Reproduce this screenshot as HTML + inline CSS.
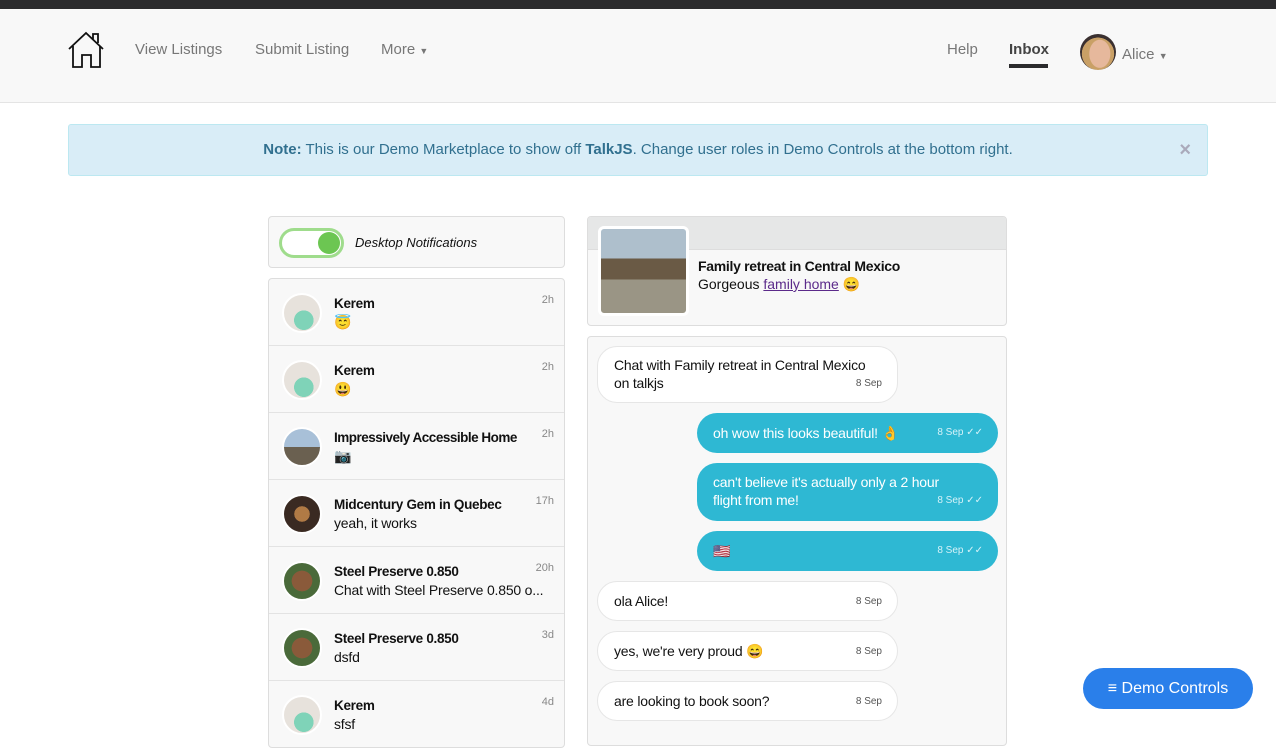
<!DOCTYPE html>
<html><head><meta charset="utf-8"><style>
*{box-sizing:border-box;margin:0;padding:0}
body{width:1276px;height:731px;overflow:hidden;background:#fff;font-family:"Liberation Sans",sans-serif;position:relative;color:#111}
.abs{position:absolute}
.top{left:0;top:0;width:1276px;height:9px;background:#2b2b2d}
.hdr{left:0;top:9px;width:1276px;height:94px;background:#f8f8f8;border-bottom:1px solid #e4e4e4}
.nav{font-size:15px;color:#777}
.alert{left:68px;top:124px;width:1140px;height:52px;background:#d9edf7;border:1px solid #bce8f1;border-radius:3px;color:#31708f;font-size:15px;text-align:center;line-height:50px}
.box{background:#f8f8f8;border:1px solid #ddd;border-radius:4px}
.item{position:absolute;left:0;width:295px;height:67px;border-bottom:1px solid #e3e3e3}
.av{position:absolute;left:13px;top:14px;width:40px;height:40px;border-radius:50%;border:2px solid #fff}
.nm{position:absolute;left:65px;top:17px;font-weight:bold;font-size:13.5px;letter-spacing:-0.3px}
.pv{position:absolute;left:65px;top:35px;font-size:14px;white-space:nowrap;overflow:hidden;width:210px;letter-spacing:-0.2px}
.tm{position:absolute;right:10px;top:15px;font-size:11px;color:#888}
.b{position:absolute;border-radius:20px;font-size:14px;padding:0 16px;line-height:18px;letter-spacing:-0.2px}
.bl{left:597px;width:301px;background:#fff;border:1px solid #e6e6e6;color:#111}
.br{left:697px;width:301px;background:#2eb8d3;color:#fff}
.d{position:absolute;right:15px;font-size:10px;line-height:12px;letter-spacing:0}
.bl .d{color:#555}.br .d{color:#d6f2f8}
</style></head><body>
<div class="abs top"></div>
<div class="abs hdr"></div>
<svg class="abs" style="left:67px;top:31px" width="40" height="38" viewBox="0 0 40 38" fill="none" stroke="#111" stroke-width="1.8"><path d="M2 18 L19 2 L36 18"/><path d="M6 15 V36 H15 V24 H24 V36 H33 V15"/><path d="M26 8 V3 H31 V12"/></svg>
<div class="abs nav" style="left:135px;top:41px">View Listings</div>
<div class="abs nav" style="left:255px;top:41px">Submit Listing</div>
<div class="abs nav" style="left:381px;top:41px">More <span style="font-size:9px">▼</span></div>
<div class="abs nav" style="left:947px;top:41px">Help</div>
<div class="abs nav" style="left:1009px;top:41px;color:#444;font-weight:bold">Inbox</div>
<div class="abs" style="left:1009px;top:64px;width:39px;height:4px;background:#2b2b2d"></div>
<div class="abs" style="left:1080px;top:34px;width:36px;height:36px;border-radius:50%;background:radial-gradient(ellipse 30% 40% at 55% 55%,#e6b89c 0 95%,transparent 100%),radial-gradient(circle at 50% 55%,#c9a066 0 60%,#3a3030 61%)"></div>
<div class="abs nav" style="left:1122px;top:46px">Alice <span style="font-size:9px">▼</span></div>
<div class="abs alert"><b>Note:</b> This is our Demo Marketplace to show off <b>TalkJS</b>. Change user roles in Demo Controls at the bottom right.<span style="position:absolute;right:16px;color:#aab;font-weight:bold;font-size:20px">×</span></div>

<div class="abs box" style="left:268px;top:216px;width:297px;height:52px">
<div class="abs" style="left:10px;top:11px;width:65px;height:30px;border:3px solid #9fdc8c;border-radius:15px;background:#fff"><div class="abs" style="right:1px;top:1px;width:22px;height:22px;border-radius:50%;background:#6cc652"></div></div>
<div class="abs" style="left:86px;top:18px;font-style:italic;font-size:13px">Desktop Notifications</div>
</div>

<div class="abs box" style="left:268px;top:278px;width:297px;height:470px;overflow:hidden">
<div class="item" style="top:0"><div class="av" style="background:radial-gradient(circle at 55% 70%,#7fd3b8 0 30%,#e7e2dc 31%)"></div><div class="nm">Kerem</div><div class="pv">😇</div><div class="tm">2h</div></div>
<div class="item" style="top:67px"><div class="av" style="background:radial-gradient(circle at 55% 70%,#7fd3b8 0 30%,#e7e2dc 31%)"></div><div class="nm">Kerem</div><div class="pv">😃</div><div class="tm">2h</div></div>
<div class="item" style="top:134px"><div class="av" style="background:linear-gradient(#a8c0d8 50%,#6a6050 50%)"></div><div class="nm" style="letter-spacing:-0.5px">Impressively Accessible Home</div><div class="pv">📷</div><div class="tm">2h</div></div>
<div class="item" style="top:201px"><div class="av" style="background:radial-gradient(circle,#b07a45 0 30%,#3a2a22 31%)"></div><div class="nm">Midcentury Gem in Quebec</div><div class="pv">yeah, it works</div><div class="tm">17h</div></div>
<div class="item" style="top:268px"><div class="av" style="background:radial-gradient(circle,#8a5a3a 0 40%,#4a6a3a 41%)"></div><div class="nm">Steel Preserve 0.850</div><div class="pv">Chat with Steel Preserve 0.850 o...</div><div class="tm">20h</div></div>
<div class="item" style="top:335px"><div class="av" style="background:radial-gradient(circle,#8a5a3a 0 40%,#4a6a3a 41%)"></div><div class="nm">Steel Preserve 0.850</div><div class="pv">dsfd</div><div class="tm">3d</div></div>
<div class="item" style="top:402px"><div class="av" style="background:radial-gradient(circle at 55% 70%,#7fd3b8 0 30%,#e7e2dc 31%)"></div><div class="nm">Kerem</div><div class="pv">sfsf</div><div class="tm">4d</div></div>
</div>

<div class="abs box" style="left:587px;top:216px;width:420px;height:110px;overflow:hidden">
<div class="abs" style="left:0;top:0;width:420px;height:33px;background:#e6e7e7;border-bottom:1px solid #ddd"></div>
<div class="abs" style="left:10px;top:9px;width:91px;height:90px;border:3px solid #fff;border-radius:6px;background:linear-gradient(#aebfcc 0 35%,#6a5a45 35% 60%,#9a9585 60%)"></div>
<div class="abs" style="left:110px;top:41px;font-weight:bold;font-size:14px;letter-spacing:-0.3px">Family retreat in Central Mexico</div>
<div class="abs" style="left:110px;top:59px;font-size:14px">Gorgeous <span style="color:#5b2a8a;text-decoration:underline">family home</span> 😄</div>
</div>

<div class="abs box" style="left:587px;top:336px;width:420px;height:410px"></div>
<div class="b bl" style="top:346px;height:57px;padding-top:9px">Chat with Family retreat in Central Mexico<br>on talkjs<span class="d" style="top:31px">8 Sep</span></div>
<div class="b br" style="top:413px;height:40px;line-height:40px">oh wow this looks beautiful! 👌<span class="d" style="top:14px">8 Sep ✓✓</span></div>
<div class="b br" style="top:463px;height:58px;padding-top:10px">can't believe it's actually only a 2 hour<br>flight from me!<span class="d" style="top:32px">8 Sep ✓✓</span></div>
<div class="b br" style="top:531px;height:40px;line-height:40px">🇺🇸<span class="d" style="top:14px">8 Sep ✓✓</span></div>
<div class="b bl" style="top:581px;height:40px;line-height:38px">ola Alice!<span class="d" style="top:14px">8 Sep</span></div>
<div class="b bl" style="top:631px;height:40px;line-height:38px">yes, we're very proud 😄<span class="d" style="top:14px">8 Sep</span></div>
<div class="b bl" style="top:681px;height:40px;line-height:38px">are looking to book soon?<span class="d" style="top:14px">8 Sep</span></div>

<div class="abs" style="left:1083px;top:668px;width:170px;height:41px;border-radius:21px;background:#2a7fea;color:#fff;font-size:16px;line-height:41px;text-align:center">≡ Demo Controls</div>
</body></html>
